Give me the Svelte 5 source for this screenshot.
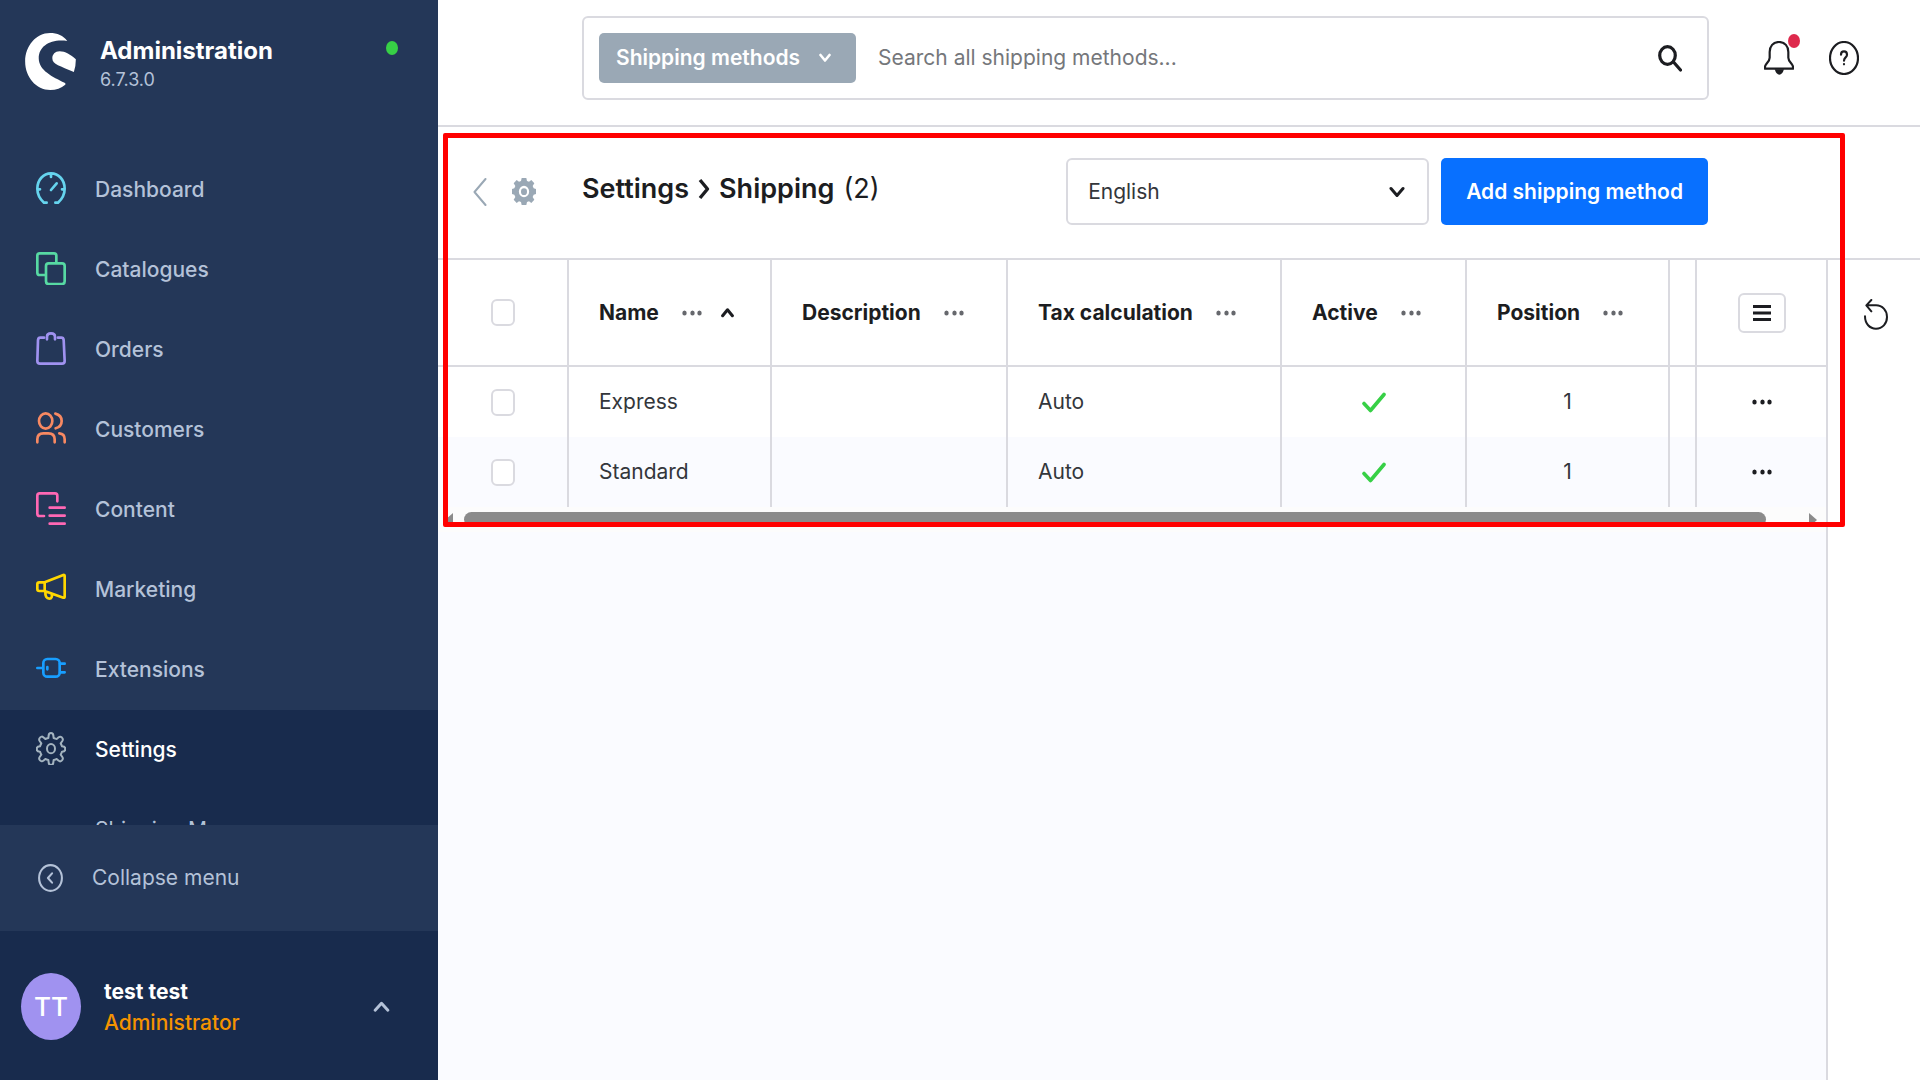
<script lang="ts">
	const menu = [
		{ label: 'Dashboard', icon: 'dashboard', color: '#66d4ee' },
		{ label: 'Catalogues', icon: 'catalogues', color: '#57d9a3' },
		{ label: 'Orders', icon: 'orders', color: '#a092f0' },
		{ label: 'Customers', icon: 'customers', color: '#f88962' },
		{ label: 'Content', icon: 'content', color: '#ff68b4' },
		{ label: 'Marketing', icon: 'marketing', color: '#ffd700' },
		{ label: 'Extensions', icon: 'extensions', color: '#189eff' }
	];

	const columns = [
		{ label: 'Name', sorted: true },
		{ label: 'Description' },
		{ label: 'Tax calculation' },
		{ label: 'Active' },
		{ label: 'Position' }
	];

	const methods = [
		{ name: 'Express', description: '', tax: 'Auto', active: true, position: 1 },
		{ name: 'Standard', description: '', tax: 'Auto', active: true, position: 1 }
	];

	let search = $state('');
	let language = $state('English');
</script>

{#snippet dots()}
	<svg class="dots" viewBox="0 0 20 6" aria-hidden="true">
		<ellipse cx="2.5" cy="3" rx="2.2" ry="2.5" />
		<ellipse cx="10.5" cy="3" rx="2.2" ry="2.5" />
		<ellipse cx="17.5" cy="3" rx="2.2" ry="2.5" />
	</svg>
{/snippet}

{#snippet menuIcon(name: string)}
	<svg class="menu-icon" viewBox="0 0 90 99" aria-hidden="true">
		{#if name === 'dashboard'}
			<path d="M32 92H24C12 81 4 67 4 50C4 24 22 4 45 4s41 20 41 46c0 17-8 31-20 42h-8M45 4v11M4 52h8M78 52h8M45 54l17-20" />
		{:else if name === 'catalogues'}
			<path d="M27 69H11q-7 0-7-7V11q0-7 7-7h43q7 0 7 7v20" />
			<rect x="30" y="34" width="56" height="62" rx="8" />
		{:else if name === 'orders'}
			<path d="M24 17H13q-6 0-7 7L4 87q0 8 8 8h66q8 0 8-8l-3-63q-1-7-7-7H66M33 22v-8c0-6 4-10 12-10s12 4 12 10v8" />
		{:else if name === 'customers'}
			<ellipse cx="29" cy="27" rx="20" ry="23" />
			<path d="M58 5c12 3 19 11 19 22S70 46 59 49M4 91V82c0-12 7-18 18-18h15c12 0 19 6 19 18v9M70 64c12 1 16 8 16 18v9" />
		{:else if name === 'content'}
			<path d="M24 72H11q-7 0-7-7V11q0-7 7-7h46q7 0 7 7v17M41 47h45M41 71h45M41 95h45" />
		{:else if name === 'marketing'}
			<path d="M26 31L82 9q4-1 4 3v62q0 4-4 3L26 57zM26 31H10q-6 0-6 6v14q0 6 6 6h16M28 58c-1 15 4 22 12 22 7 0 9-6 7-15" />
		{:else if name === 'extensions'}
			<rect x="22" y="21" width="49" height="53" rx="12" />
			<path d="M4 48h16M34 45v7M72 35h14M72 61h14" />
		{:else}
			<path d="M45 3c4 0 7 3 7 8l1 7c4 1 7 3 9 3l6-5c3-3 8-2 10 1 3 3 3 7 1 10l-5 7c2 3 3 6 4 9 5 0 10 2 10 8s-5 8-10 8c-1 3-2 6-4 9l5 7c2 3 2 7-1 10s-7 4-10 1l-6-5c-2 1-5 3-9 3l-1 7c0 5-3 8-7 8s-7-3-7-8l-1-7c-4-1-7-2-9-3l-6 5c-3 3-7 2-10-1s-3-7-1-10l5-7c-2-3-3-6-4-9-5 0-10-2-10-8s5-8 10-8c1-3 2-6 4-9l-5-7c-2-3-2-7 1-10 3-4 7-4 10-1l6 5c2-1 5-2 9-3l1-7c0-5 3-8 7-8z" />
			<ellipse cx="45" cy="50" rx="12" ry="14" />
		{/if}
	</svg>
{/snippet}

<div class="app">
	<aside class="sidebar">
		<div class="brand">
			<svg class="logo" viewBox="75 98 153 172" aria-hidden="true">
				<path d="M202 122C190 106 172 98 150 98C108 98 75 137 75 184s33 86 76 86c17 0 33-5 45-16q3-3-2-6C158 230 116 211 116 174C116 138 151 115 202 122z" />
				<path d="M228 177C212 163 196 153 179 153C165 153 157 163 157 174C157 194 181 196 222 216Q228 198 228 177z" />
			</svg>
			<div class="brand-text">
				<strong>Administration</strong>
				<span>6.7.3.0</span>
			</div>
			<span class="status"></span>
		</div>

		<nav>
			{#each menu as item (item.label)}
				<a href="#{item.icon}">
					<span class="icon-slot" style="color: {item.color}">{@render menuIcon(item.icon)}</span>
					{item.label}
				</a>
			{/each}
			<div class="current">
				<a href="#settings">
					<span class="icon-slot">{@render menuIcon('settings')}</span>
					Settings
				</a>
				<a class="sub" href="#shipping">Shipping M</a>
			</div>
		</nav>

		<button class="collapse">
			<svg viewBox="0 0 24 27" aria-hidden="true">
				<ellipse cx="12" cy="13.5" rx="11" ry="12.4" />
				<path d="M13.5 9L9.5 13.5L13.5 18" />
			</svg>
			Collapse menu
		</button>

		<button class="user">
			<span class="avatar">TT</span>
			<span class="user-text">
				<strong>test test</strong>
				<span>Administrator</span>
			</span>
			<svg viewBox="0 0 16 12" aria-hidden="true"><path d="M2 9.5L8 3L14 9.5" /></svg>
		</button>
	</aside>

	<main>
		<header class="topbar">
			<div class="search">
				<button class="chip">
					Shipping methods
					<svg viewBox="0 0 12 10" aria-hidden="true"><path d="M1.5 2L6 7.5L10.5 2" /></svg>
				</button>
				<input type="text" aria-label="Search" placeholder="Search all shipping methods..." bind:value={search} />
				<svg class="magnifier" viewBox="0 0 24 27" aria-hidden="true">
					<ellipse cx="9.5" cy="10.5" rx="7.8" ry="8.8" />
					<path d="M15.5 17L22.5 25" />
				</svg>
			</div>
			<div class="actions">
				<button class="bell" aria-label="Notifications">
					<svg viewBox="0 0 90 102" aria-hidden="true">
						<path d="M45 3C27 3 17 16 17 33V50C17 62 4 68 3 77V83H87V77C86 68 73 62 73 50V33C73 16 63 3 45 3z" />
						<path class="clapper" d="M32 85H60Q55 101 46 101T32 85z" />
					</svg>
					<span class="badge"></span>
				</button>
				<button aria-label="Help">
					<svg viewBox="0 0 90 102" aria-hidden="true">
						<ellipse cx="45" cy="51" rx="42" ry="48" />
						<path d="M36 41C36 33 40 31 45 31S54 34 54 41C54 50 45 48 45 59M45 69V70" />
					</svg>
				</button>
			</div>
		</header>

		<div class="toolbar">
			<div class="back">
				<button aria-label="Back">
					<svg class="prev" viewBox="0 0 14 28" aria-hidden="true"><path d="M12.5 1L1.5 14L12.5 27" /></svg>
				</button>
				<svg class="gear" viewBox="0 0 72 81" aria-hidden="true">
					<path fill-rule="evenodd" d="M29 0H43L45 9L51 11L58 6L67 16L62 24L65 31L72 33V48L65 50L62 57L67 65L58 75L51 70L45 72L43 81H29L27 72L21 70L14 75L5 65L10 57L7 50L0 48V33L7 31L10 24L5 16L14 6L21 11L27 9zM36 23A15 17 0 1 0 36 58A15 17 0 1 0 36 23zM36 31A9 10 0 1 1 36 51A9 10 0 1 1 36 31z" />
				</svg>
			</div>
			<h1>
				<a href="#settings">Settings</a>
				<svg viewBox="0 0 12 22" aria-hidden="true"><path d="M2 2L9.5 11L2 20" /></svg>
				Shipping
				<span>(2)</span>
			</h1>
			<div class="language">
				<select aria-label="Language" bind:value={language}>
					<option>English</option>
					<option>Deutsch</option>
				</select>
				<svg viewBox="0 0 16 12" aria-hidden="true"><path d="M2 2.5L8 9.5L14 2.5" /></svg>
			</div>
			<button class="primary">Add shipping method</button>
		</div>

		<div class="content">
			<section class="listing">
				<table>
					<colgroup>
						<col class="c-check" />
						<col class="c-name" />
						<col />
						<col class="c-tax" />
						<col class="c-active" />
						<col class="c-position" />
						<col class="c-rest" />
						<col class="c-menu" />
					</colgroup>
					<thead>
						<tr>
							<th class="center"><input type="checkbox" aria-label="Select all" /></th>
							{#each columns as column (column.label)}
								<th>
									<div class="head">
										{column.label}
										<button aria-label="{column.label} options">{@render dots()}</button>
										{#if column.sorted}
											<svg class="sort" viewBox="0 0 12 10" aria-hidden="true"><path d="M1.5 8L6 2.5L10.5 8" /></svg>
										{/if}
									</div>
								</th>
							{/each}
							<th></th>
							<th class="center">
								<button class="list-settings" aria-label="List settings">
									<svg viewBox="0 0 18 18" aria-hidden="true"><path d="M0 2.5H18M0 9H18M0 15.5H18" /></svg>
								</button>
							</th>
						</tr>
					</thead>
					<tbody>
						{#each methods as method (method.name)}
							<tr>
								<td class="center"><input type="checkbox" aria-label="Select {method.name}" /></td>
								<td>{method.name}</td>
								<td>{method.description}</td>
								<td>{method.tax}</td>
								<td class="center">
									{#if method.active}
										<svg class="tick" viewBox="0 0 24 21" aria-hidden="true"><path d="M2 11.5L8.5 18.5L22 2.5" /></svg>
									{/if}
								</td>
								<td class="center">{method.position}</td>
								<td></td>
								<td class="center">
									<button class="row-menu" aria-label="{method.name} actions">{@render dots()}</button>
								</td>
							</tr>
						{/each}
					</tbody>
				</table>
				<div class="scrollbar">
					<svg viewBox="0 0 8 14" aria-hidden="true"><path d="M8 0V14L0 7z" /></svg>
					<div class="thumb"></div>
					<svg viewBox="0 0 8 14" aria-hidden="true"><path d="M0 0V14L8 7z" /></svg>
				</div>
			</section>
			<aside class="tools">
				<button aria-label="Refresh">
					<svg viewBox="0 0 72 93" aria-hidden="true">
						<path d="M3 52C3 74 17 89 36 89S69 74 69 54S55 19 36 19H8M22 3L7 19L22 37" />
					</svg>
				</button>
			</aside>
		</div>

		<div class="highlight"></div>
	</main>
</div>

<style>
	:global(body) {
		margin: 0;
	}

	.app {
		display: flex;
		min-height: 100vh;
		font-family: Inter, 'Liberation Sans', sans-serif;
		font-size: 21px;
		line-height: 28px;
		color: #33363b;
		background: #fff;
	}

	button {
		padding: 0;
		border: none;
		background: none;
		font: inherit;
		color: inherit;
		cursor: pointer;
	}

	svg {
		display: block;
		flex: none;
		fill: none;
		stroke: currentColor;
		stroke-linecap: round;
		stroke-linejoin: round;
	}

	/* sidebar */
	.sidebar {
		display: flex;
		flex-direction: column;
		flex: none;
		width: 438px;
		height: 100vh;
		box-sizing: border-box;
		background: #243758;
		color: #b4c2d8;
	}

	.brand {
		display: flex;
		align-items: flex-start;
		flex: none;
		height: 150px;
		box-sizing: border-box;
		padding: 33px 40px 0 25px;
	}

	.logo {
		width: 51px;
		height: 57px;
		fill: #fff;
		stroke: none;
	}

	.brand-text {
		display: flex;
		flex-direction: column;
		flex: 1;
		margin-left: 24px;
	}

	.brand-text strong {
		line-height: 36px;
		font-size: 24px;
		font-weight: 700;
		color: #fff;
	}

	.brand-text span {
		font-size: 18px;
		line-height: 22px;
	}

	.status {
		width: 12px;
		height: 14px;
		margin-top: 8px;
		border-radius: 50%;
		background: #37d046;
	}

	nav {
		flex: 1;
		min-height: 0;
		overflow: hidden;
	}

	nav a {
		display: flex;
		align-items: center;
		height: 80px;
		padding-left: 36px;
		font-weight: 500;
		color: inherit;
		text-decoration: none;
	}

	.icon-slot {
		margin-right: 29px;
		padding-bottom: 3px;
	}

	.menu-icon {
		width: 30px;
		height: 33px;
		stroke-width: 8;
	}

	.current {
		background: #182b4d;
	}

	.current .icon-slot {
		color: #a3b3bf;
	}

	.current .menu-icon {
		stroke-width: 6;
	}

	.current a {
		color: #fff;
	}

	.current a.sub {
		padding-left: 95px;
		font-weight: 400;
		color: #b4c2d8;
	}

	.collapse {
		display: flex;
		align-items: center;
		flex: none;
		height: 106px;
		padding-left: 38px;
	}

	.collapse svg {
		width: 25px;
		height: 28px;
		margin-right: 29px;
		stroke-width: 2;
	}

	.user {
		display: flex;
		align-items: center;
		flex: none;
		height: 149px;
		padding: 2px 48px 0 21px;
		box-sizing: border-box;
		background: #182b4d;
		text-align: left;
	}

	.avatar {
		width: 60px;
		border-radius: 50%;
		background: #a092f0;
		font-size: 26px;
		font-weight: 500;
		line-height: 67px;
		text-align: center;
		color: #fff;
	}

	.user-text {
		display: flex;
		flex-direction: column;
		flex: 1;
		margin-left: 23px;
		line-height: 31px;
		color: #f59300;
	}

	.user-text span {
		font-weight: 500;
	}

	.user-text strong {
		font-weight: 700;
		color: #fff;
	}

	.user svg {
		width: 17px;
		height: 13px;
		stroke-width: 2.8;
	}

	/* top bar */
	main {
		position: relative;
		display: flex;
		flex-direction: column;
		flex: 1;
		min-width: 0;
	}

	.topbar {
		display: flex;
		align-items: center;
		height: 127px;
		box-sizing: border-box;
		padding: 0 61px 9px 144px;
		border-bottom: 2px solid #dadae0;
	}

	.search {
		display: flex;
		align-items: center;
		flex: 1;
		height: 84px;
		box-sizing: border-box;
		padding: 0 25px 0 15px;
		border: 2px solid #dadae0;
		border-radius: 6px;
	}

	.chip {
		display: flex;
		align-items: center;
		height: 50px;
		padding: 0 25px 0 17px;
		border-radius: 5px;
		background: #9aa8b5;
		font-weight: 600;
		color: #fff;
	}

	.chip svg {
		width: 12px;
		height: 10px;
		margin-left: 19px;
		stroke-width: 2.6;
	}

	.search input {
		flex: 1;
		min-width: 0;
		padding: 0 0 0 22px;
		border: none;
		outline: none;
		font: inherit;
		color: inherit;
	}

	.search input::placeholder {
		color: #75777b;
		opacity: 1;
	}

	.magnifier {
		width: 24px;
		height: 27px;
		color: #1c1d21;
		stroke-width: 3.2;
	}

	.actions {
		display: flex;
		gap: 35px;
		margin-left: 55px;
		color: #1c1d21;
	}

	.actions button {
		position: relative;
	}

	.actions svg {
		width: 30px;
		height: 34px;
		stroke-width: 6.5;
	}

	.actions .clapper {
		fill: currentColor;
		stroke: none;
	}

	.badge {
		position: absolute;
		top: -7px;
		right: -6px;
		width: 12px;
		height: 14px;
		border-radius: 50%;
		background: #de294c;
	}

	/* page toolbar */
	.toolbar {
		display: flex;
		align-items: center;
		height: 133px;
		box-sizing: border-box;
		padding: 0 212px 2px 0;
		border-bottom: 2px solid #dadae0;
	}

	.back {
		display: flex;
		align-items: center;
		flex: none;
		gap: 25px;
		width: 109px;
		padding-left: 35px;
		color: #9aa8b5;
	}

	.prev {
		width: 14px;
		height: 28px;
		stroke-width: 2;
	}

	.gear {
		width: 24px;
		height: 27px;
		fill: currentColor;
		stroke: none;
	}

	h1 {
		display: flex;
		align-items: center;
		flex: 1;
		gap: 9px;
		margin: 0;
		padding-bottom: 6px;
		font-size: 27px;
		font-weight: 600;
		white-space: nowrap;
		color: #1c1d21;
	}

	h1 a {
		color: inherit;
		text-decoration: none;
	}

	h1 svg {
		width: 12px;
		height: 22px;
		stroke-width: 3.4;
		stroke-linecap: butt;
	}

	h1 span {
		font-weight: 400;
	}

	.language {
		position: relative;
		width: 363px;
		margin-right: 12px;
	}

	.language select {
		width: 100%;
		height: 67px;
		box-sizing: border-box;
		padding: 0 60px 0 20px;
		border: 2px solid #dadae0;
		border-radius: 6px;
		outline: none;
		background: #fff;
		font: inherit;
		color: inherit;
		appearance: none;
	}

	.language svg {
		position: absolute;
		top: 28px;
		right: 24px;
		width: 16px;
		height: 12px;
		color: #1c1d21;
		stroke-width: 3;
		pointer-events: none;
	}

	.primary {
		height: 67px;
		padding: 0 25px;
		border-radius: 5px;
		background: #0870ff;
		font-weight: 600;
		white-space: nowrap;
		color: #fff;
	}

	/* listing */
	.content {
		display: flex;
		flex: 1;
	}

	.listing {
		flex: 1;
		min-width: 0;
		background: #fafbff;
	}

	table {
		width: 100%;
		table-layout: fixed;
		border-collapse: separate;
		border-spacing: 0;
	}

	.c-check {
		width: 131px;
	}

	.c-name,
	.c-position {
		width: 203px;
	}

	.c-tax {
		width: 274px;
	}

	.c-active {
		width: 185px;
	}

	.c-rest {
		width: 27px;
	}

	.c-menu {
		width: 129px;
	}

	th,
	td {
		box-sizing: border-box;
		height: 70px;
		padding: 0 0 0 30px;
		border-right: 2px solid #dadae0;
		text-align: left;
	}

	th:last-child,
	td:last-child {
		border-right: none;
	}

	th {
		height: 107px;
		border-bottom: 2px solid #dadae0;
		background: #fff;
		font-weight: 700;
		color: #1c1d21;
	}

	tbody tr:nth-child(odd) {
		background: #fff;
	}

	.center {
		padding: 0;
		text-align: center;
	}

	.center button {
		display: block;
		margin: 0 auto;
	}

	.center svg {
		margin: 0 auto;
	}

	.head {
		display: flex;
		align-items: center;
		white-space: nowrap;
	}

	.head button {
		margin-left: 23px;
		color: #66686d;
	}

	.dots {
		width: 20px;
		height: 6px;
		fill: currentColor;
		stroke: none;
	}

	.sort {
		width: 13px;
		height: 11px;
		margin-left: 19px;
		stroke-width: 2.8;
	}

	input[type='checkbox'] {
		display: block;
		width: 24px;
		height: 27px;
		box-sizing: border-box;
		margin: 0 auto;
		border: 2px solid #dadae0;
		border-radius: 6px;
		background: #fff;
		appearance: none;
	}

	.list-settings {
		width: 48px;
		height: 40px;
		border: 2px solid #dadae0;
		border-radius: 6px;
	}

	.list-settings svg {
		width: 18px;
		height: 18px;
		stroke-width: 3;
		stroke-linecap: butt;
	}

	.tick {
		width: 24px;
		height: 21px;
		color: #37d046;
		stroke-width: 3.6;
	}

	.row-menu {
		color: #1c1d21;
	}

	.scrollbar {
		display: flex;
		align-items: center;
		height: 25px;
		padding: 0 9px 0 7px;
		background: #fcfcfc;
	}

	.scrollbar svg {
		width: 8px;
		height: 14px;
		fill: #8b8b8b;
		stroke: none;
	}

	.thumb {
		flex: 1;
		height: 15px;
		margin: 0 43px 0 11px;
		border-radius: 8px;
		background: #8b8b8b;
	}

	.tools {
		flex: none;
		width: 94px;
		box-sizing: border-box;
		padding: 39px 0 0 36px;
		border-left: 2px solid #dadae0;
		color: #1c1d21;
	}

	.tools svg {
		width: 24px;
		height: 31px;
		stroke-width: 6;
	}

	.highlight {
		position: absolute;
		top: 133px;
		left: 5px;
		right: 75px;
		height: 394px;
		box-sizing: border-box;
		border: 5px solid #f00;
		border-radius: 2px;
		pointer-events: none;
	}
</style>
